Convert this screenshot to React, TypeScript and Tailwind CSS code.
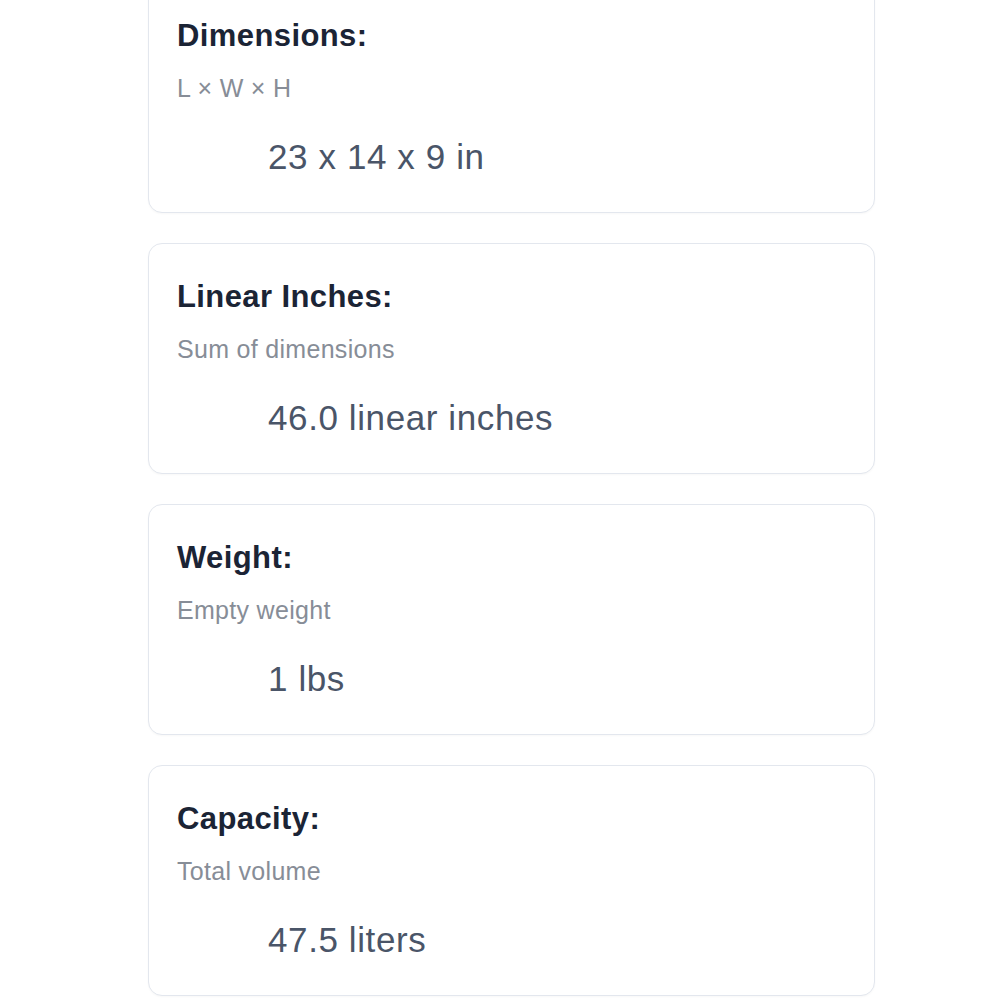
// Spec cards list
interface SpecItem {
  label: string;
  hint: string;
  value: string;
}

const specs: SpecItem[] = [
  { label: 'Dimensions:', hint: 'L × W × H', value: '23 x 14 x 9 in' },
  { label: 'Linear Inches:', hint: 'Sum of dimensions', value: '46.0 linear inches' },
  { label: 'Weight:', hint: 'Empty weight', value: '1 lbs' },
  { label: 'Capacity:', hint: 'Total volume', value: '47.5 liters' },
];

function SpecCard({ item }: { item: SpecItem }) {
  return (
    <div className="bg-white border border-[#e3e7ee] rounded-[14px] pl-[28px] pr-6 pt-[35px] pb-[34px] shadow-[0_1px_2px_rgba(15,23,42,0.03)]">
      <h3 className="text-[31px] leading-[36px] font-bold tracking-[0.4px] text-[#1b2435]">{item.label}</h3>
      <p className="mt-[19px] text-[25px] leading-[30px] tracking-[0.3px] text-[#878d97]">{item.hint}</p>
      <p className="mt-[33px] ml-[91px] text-[35px] leading-[42px] tracking-[0.6px] text-[#4a5568]">{item.value}</p>
    </div>
  );
}

export default function App() {
  return (
    <div
      className="min-h-screen w-full bg-white overflow-hidden"
      style={{ fontFamily: '"Liberation Sans", Arial, sans-serif' }}
    >
      <div className="ml-[148px] w-[727px] -mt-[18px] flex flex-col gap-[30px]">
        {specs.map((s) => (
          <SpecCard key={s.label} item={s} />
        ))}
      </div>
    </div>
  );
}
